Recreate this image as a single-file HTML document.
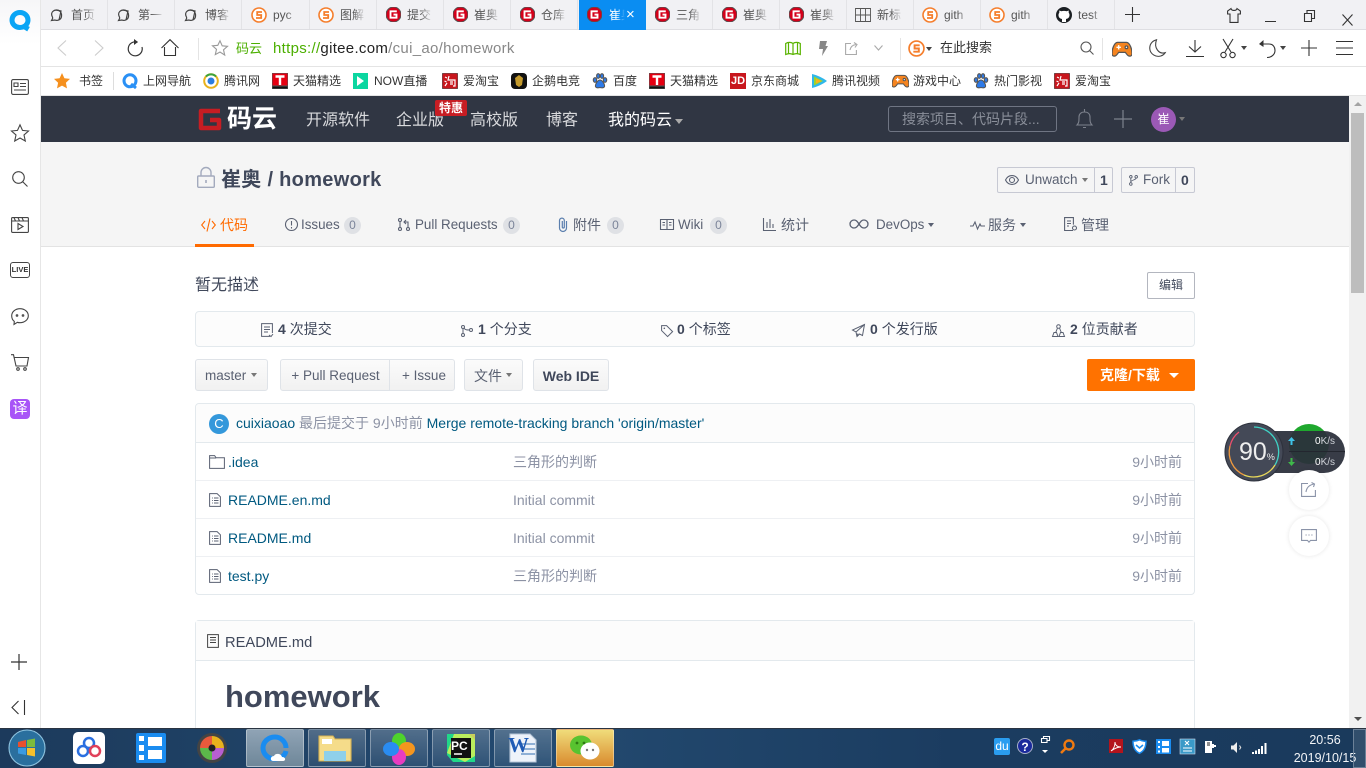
<!DOCTYPE html>
<html><head><meta charset="utf-8"><title>崔奥 / homework</title>
<style>
html,body{margin:0;padding:0;width:1366px;height:768px;overflow:hidden;background:#fff}
body{position:relative;font-family:"Liberation Sans","Noto Sans CJK SC",sans-serif;font-size:13px;color:#40485b}
.a,.t,svg.i{position:absolute}
.t{white-space:nowrap;line-height:18px}
svg.i{overflow:visible;fill:none;stroke:#555;stroke-width:1.1}
.tab{position:absolute;top:0;width:67px;height:29px;border-right:1px solid #e3e3e6;box-sizing:border-box;overflow:hidden}
.tab span{position:absolute;left:30px;top:7px;font-size:12px;line-height:16px;color:#555;white-space:nowrap;width:26px;overflow:hidden;-webkit-mask-image:linear-gradient(90deg,#000 50%,transparent)}
.bm{position:absolute;top:73px;font-size:12px;line-height:16px;color:#333;white-space:nowrap}
.nav{position:absolute;top:111px;font-size:16px;line-height:20px;color:#d9dadd;white-space:nowrap}
.rt{position:absolute;top:216px;font-size:14px;line-height:18px;color:#5a6172;white-space:nowrap}
.rt.l{font-size:13.4px}
.bd{position:absolute;top:217px;width:17px;height:17px;border-radius:50%;background:#dfe1e5;color:#7b8499;font-size:12px;line-height:17px;text-align:center}
.btn{position:absolute;top:359px;height:32px;box-sizing:border-box;border:1px solid #dfe3e8;border-radius:3px;background:linear-gradient(#fbfbfb,#f1f1f1);font-size:13.5px;line-height:32px;color:#5a6172;text-align:center;white-space:nowrap}
.name{position:absolute;left:228px;font-size:14px;line-height:18px;color:#005980;white-space:nowrap}
.msg{position:absolute;left:513px;font-size:14px;line-height:18px;color:#8c92a4;white-space:nowrap}
.tm{position:absolute;right:184px;font-size:14px;line-height:18px;color:#8c92a4;white-space:nowrap}
.sep{position:absolute;left:196px;width:998px;height:1px;background:#eef0f3}
.st{position:absolute;top:320px;font-size:14px;line-height:18px;color:#40485b;white-space:nowrap}
.st b{margin-right:4px}
.tb{position:absolute;top:729px;height:38px;box-sizing:border-box;border:1px solid rgba(255,255,255,.35);border-radius:2px;background:linear-gradient(rgba(255,255,255,.22),rgba(255,255,255,.06))}
</style></head>
<body>
<svg width="0" height="0" style="position:absolute">
<defs>
<symbol id="g" viewBox="0 0 16 16"><circle cx="8" cy="8" r="8" fill="#d4001a"/><path d="M11.5 4.6H4.8v6.8h6.4V8H8" fill="none" stroke="#fff" stroke-width="2"/></symbol>
<symbol id="s" viewBox="0 0 16 16"><circle cx="8" cy="8" r="7" fill="#fff" stroke="#f57e2c" stroke-width="1.6"/><path d="M11 5H6.2v3h4v3H5" fill="none" stroke="#f57e2c" stroke-width="1.8"/></symbol>
<symbol id="q" viewBox="0 0 16 16"><path d="M2.5 13.5C4 11 4 11 3 9 1.5 5 5 3 7.500 3 11 3 13 6 12.500 9.500 12 13 8 14 6 13z" fill="none" stroke="#444" stroke-width="1.2"/><path d="M7 3l5 1-2 9" fill="none" stroke="#444" stroke-width="1.2"/></symbol>
<symbol id="tm" viewBox="0 0 16 16"><rect width="16" height="16" fill="#e60012"/><rect y="13" width="16" height="3" fill="#111"/><path d="M3.500 3.500h9M8 3.500V12" stroke="#fff" stroke-width="2.400"/></symbol>
<symbol id="tao" viewBox="0 0 16 16"><rect width="16" height="16" rx="2" fill="#c8161d"/><path d="M3 4l2 1M2.500 8l2 1M3 13l2-3M7 3l-1 4h7v6h-2M8 9h3M8 11h3" fill="none" stroke="#fff" stroke-width="1.200"/></symbol>
<symbol id="bd" viewBox="0 0 16 16"><g fill="#2d7ae8"><ellipse cx="3" cy="7" rx="1.700" ry="2.300"/><ellipse cx="6.200" cy="3" rx="1.600" ry="2.300"/><ellipse cx="10" cy="3" rx="1.600" ry="2.300"/><ellipse cx="13" cy="7" rx="1.700" ry="2.300"/><path d="M8 7c2 0 5 4 4.500 6.500C12 15 10 15 8 14.500 6 15 4 15 3.500 13.500 3 11 6 7 8 7z"/></g></symbol>
<symbol id="gm" viewBox="0 0 18 16"><path d="M5 2h8c3 0 5 6 5 10 0 3-3 3-4.500 1L12 11H6l-1.500 2C3 15 0 15 0 12 0 8 2 2 5 2z" fill="#f5841f"/><path d="M4 6.500h4M6 4.500v4" stroke="#fff" stroke-width="1.300"/><circle cx="13" cy="6.500" r="1.200" fill="#fff"/></symbol>
<symbol id="doc" viewBox="0 0 12 14"><path d="M.6.6h7.500l3.300 3.200v9.600H.6z" fill="none" stroke="#5a6172" stroke-width="1"/><path d="M3 5h.8M5 5h4.500M3 7.500h.8M5 7.500h4.500M3 10h.8M5 10h4.500" stroke="#5a6172" stroke-width="1"/></symbol>
</defs>
</svg>

<!-- tab bar -->
<div class="a" style="left:41px;top:0;width:1325px;height:29px;background:#f1f1f4;border-bottom:1px solid #dedee2"></div>
<div class="tab" style="left:41px"><span>首页</span></div>
<div class="tab" style="left:108px"><span>第一</span></div>
<div class="tab" style="left:175px"><span>博客</span></div>
<div class="tab" style="left:243px"><span>pyc</span></div>
<div class="tab" style="left:310px"><span>图解</span></div>
<div class="tab" style="left:377px"><span>提交</span></div>
<div class="tab" style="left:444px"><span>崔奥</span></div>
<div class="tab" style="left:511px"><span>仓库</span></div>
<div class="tab" style="left:579px;height:30px;background:#0a8df2;border:0"><span style="color:#fff;width:16px">崔奥</span><div class="t" style="left:47px;top:6px;color:#fff;font-size:15px">×</div></div>
<div class="tab" style="left:646px"><span>三角</span></div>
<div class="tab" style="left:713px"><span>崔奥</span></div>
<div class="tab" style="left:780px"><span>崔奥</span></div>
<div class="tab" style="left:847px"><span>新标</span></div>
<div class="tab" style="left:914px"><span>gith</span></div>
<div class="tab" style="left:981px"><span>gith</span></div>
<div class="tab" style="left:1048px"><span>test</span></div>
<svg class="i" style="left:49px;top:7px" width="16" height="16"><use href="#q"/></svg>
<svg class="i" style="left:116px;top:7px" width="16" height="16"><use href="#q"/></svg>
<svg class="i" style="left:183px;top:7px" width="16" height="16"><use href="#q"/></svg>
<svg class="i" style="left:251px;top:7px" width="16" height="16"><use href="#s"/></svg>
<svg class="i" style="left:318px;top:7px" width="16" height="16"><use href="#s"/></svg>
<svg class="i" style="left:386px;top:7px" width="15" height="15"><use href="#g"/></svg>
<svg class="i" style="left:453px;top:7px" width="15" height="15"><use href="#g"/></svg>
<svg class="i" style="left:520px;top:7px" width="15" height="15"><use href="#g"/></svg>
<svg class="i" style="left:587px;top:7px" width="15" height="15"><use href="#g"/></svg>
<svg class="i" style="left:655px;top:7px" width="15" height="15"><use href="#g"/></svg>
<svg class="i" style="left:722px;top:7px" width="15" height="15"><use href="#g"/></svg>
<svg class="i" style="left:789px;top:7px" width="15" height="15"><use href="#g"/></svg>
<svg class="i" style="left:855px;top:8px" width="16" height="14"><path d="M.5.5h15v13H.5zM5.500.5v13M10.500.5v13M.5 7h15" stroke-width=".9"/></svg>
<svg class="i" style="left:922px;top:7px" width="16" height="16"><use href="#s"/></svg>
<svg class="i" style="left:989px;top:7px" width="16" height="16"><use href="#s"/></svg>
<svg class="i" style="left:1056px;top:7px" width="16" height="16"><circle cx="8" cy="8" r="8" fill="#1b1f23" stroke="none"/><path d="M6 15v-3c-2.500-.5-3.500-2-3.500-4 0-1 .3-1.700.8-2.300L3.300 3.500l2 .8c1.500-.5 3.900-.5 5.400 0l2-.8v2.200c.5.600.8 1.300.8 2.300 0 2-1 3.500-3.500 4v3z" fill="#fff" stroke="none"/></svg>
<svg class="i" style="left:1125px;top:7px" width="15" height="15"><path d="M7.500 0v15M0 7.500h15" stroke="#333"/></svg>
<svg class="i" style="left:1227px;top:8px" width="14" height="15"><path d="M4 .6L.6 3v3H3v8.400h8V6h2.400V3L10 .6C9.500 3 4.500 3 4 .6z" stroke="#333"/></svg>
<div class="a" style="left:1265px;top:21px;width:11px;height:1px;background:#333"></div>
<svg class="i" style="left:1304px;top:10px" width="11" height="12"><path d="M.5 3.500h7v8h-7zM3 3.500V.5h7.500v8h-3" stroke="#333"/></svg>
<svg class="i" style="left:1342px;top:14px" width="11" height="12"><path d="M.5.500l10 11M10.500.500l-10 11" stroke="#333"/></svg>

<!-- address bar -->
<div class="a" style="left:41px;top:66px;width:1325px;height:1px;background:#e4e4e4"></div>
<svg class="i" style="left:57px;top:40px" width="10" height="16"><path d="M9 .5L1 8l8 7.500" stroke="#ccc"/></svg>
<svg class="i" style="left:94px;top:40px" width="10" height="16"><path d="M1 .5L9 8l-8 7.500" stroke="#ccc"/></svg>
<svg class="i" style="left:127px;top:39px" width="17" height="18"><path d="M10.500 3.200A7 7 0 1 0 15 8" stroke="#333" stroke-width="1.200"/><path d="M7 0l4 3-4 3" fill="#333" stroke="none"/></svg>
<svg class="i" style="left:161px;top:39px" width="18" height="17"><path d="M.5 9L9 .7 17.500 9M3.500 8v8.500h11V8" stroke="#333"/></svg>
<div class="a" style="left:198px;top:38px;width:1px;height:22px;background:#e4e4e4"></div>
<svg class="i" style="left:212px;top:40px" width="16" height="16"><path d="M8 .8l2.200 5 5.300.5-4 3.500 1.200 5.300L8 12l-4.700 2.600 1.200-5.300-4-3.500 5.300-.5z" stroke="#999"/></svg>
<div class="t" style="left:236px;top:40px;font-size:13px;color:#4caf00">码云</div>
<div class="t" style="left:273px;top:40px;font-size:15px;letter-spacing:.3px;color:#888"><span style="color:#4caf00">https://</span><span style="color:#222">gitee.com</span>/cui_ao/homework</div>
<svg class="i" style="left:785px;top:41px" width="16" height="14"><path d="M.7 2.500C3 1 6 1 8 2.500 10 1 13 1 15.300 2.500v11C13 12.500 10 12.500 8 13.500 6 12.500 3 12.500.7 13.500zM8 2.500v11M3.500 1v11.500M12.500 1v11.500" stroke="#59b300" stroke-width="1.200"/></svg>
<svg class="i" style="left:819px;top:41px" width="9" height="15"><path d="M1 0h7L6.500 5H9L3 15l1-7H0z" fill="#888" stroke="none"/></svg>
<svg class="i" style="left:845px;top:42px" width="13" height="13"><path d="M6 1.500H.6v11h10.800V8M5 8c.5-3 2.500-5 6-5.500M9 .5l3 2-2 3" stroke="#aaa"/></svg>
<svg class="i" style="left:874px;top:45px" width="9" height="6"><path d="M.5.500L4.500 5l4-4.500" stroke="#aaa"/></svg>
<div class="a" style="left:900px;top:38px;width:1px;height:22px;background:#e4e4e4"></div>
<svg class="i" style="left:908px;top:40px" width="17" height="17"><use href="#s"/></svg>
<div class="a" style="left:926px;top:47px;border:3.500px solid transparent;border-top:4px solid #444;border-bottom:0"></div>
<div class="t" style="left:940px;top:39px;font-size:13px;color:#333">在此搜索</div>
<svg class="i" style="left:1080px;top:41px" width="14" height="14"><circle cx="6" cy="6" r="5" stroke="#555"/><path d="M9.500 9.500L13.500 13.500" stroke="#555"/></svg>
<div class="a" style="left:1102px;top:38px;width:1px;height:22px;background:#e4e4e4"></div>
<svg class="i" style="left:1112px;top:40px" width="20" height="18"><use href="#gm"/></svg>
<svg class="i" style="left:1149px;top:39px" width="17" height="19"><path d="M7.500.8C2.500 2 .5 6 .8 10c.5 5 6 8.500 11 7 2-.6 3.500-1.800 4.400-3.300C10 15.500 4.500 9 7.500.8z" stroke="#444"/></svg>
<svg class="i" style="left:1186px;top:40px" width="18" height="17"><path d="M9 0v12M3 6.500L9 12l6-5.500M0 16.500h18" stroke="#333"/></svg>
<svg class="i" style="left:1220px;top:39px" width="16" height="20"><path d="M3 0l8 13M13 0L5 13" stroke="#333"/><circle cx="3.500" cy="16" r="2.700" stroke="#333"/><circle cx="12.500" cy="16" r="2.700" stroke="#333"/></svg>
<div class="a" style="left:1241px;top:46px;border:3px solid transparent;border-top:4px solid #444;border-bottom:0"></div>
<svg class="i" style="left:1259px;top:40px" width="17" height="18"><path d="M1 4h9c4 0 6 3 6 6.500S13 17.500 8 17.500" stroke="#333"/><path d="M4.500 0L0 4l4.500 3" fill="#333" stroke="none"/></svg>
<div class="a" style="left:1280px;top:46px;border:3px solid transparent;border-top:4px solid #444;border-bottom:0"></div>
<svg class="i" style="left:1301px;top:40px" width="16" height="16"><path d="M8 0v16M0 8h16" stroke="#333"/></svg>
<svg class="i" style="left:1336px;top:41px" width="17" height="14"><path d="M0 .5h17M0 7h17M0 13.500h17" stroke="#333"/></svg>

<!-- bookmarks -->
<div class="a" style="left:41px;top:95px;width:1325px;height:1px;background:#e4e4e4"></div>
<svg class="i" style="left:54px;top:73px" width="16" height="16"><path d="M8 0l2.400 5.300 5.600.6-4.100 3.800 1.100 5.700L8 12.600 3 15.400l1.100-5.700L0 5.900l5.600-.6z" fill="#f5901e" stroke="none"/></svg>
<span class="bm" style="left:79px">书签</span>
<div class="a" style="left:113px;top:72px;width:1px;height:18px;background:#ddd"></div>
<svg class="i" style="left:122px;top:73px" width="16" height="16"><circle cx="8" cy="7.800" r="6" stroke="#2a90f5" stroke-width="3"/><path d="M9 11l5 4" stroke="#2a90f5" stroke-width="3"/></svg>
<span class="bm" style="left:143px">上网导航</span>
<svg class="i" style="left:203px;top:73px" width="16" height="16"><circle cx="8" cy="8" r="6.800" stroke="#e8b21d" stroke-width="2"/><path d="M3 3.500A7 7 0 0 1 13 3.500" stroke="#3ca33c" stroke-width="2"/><circle cx="8" cy="8" r="3.500" fill="#2a7de1" stroke="none"/></svg>
<span class="bm" style="left:224px">腾讯网</span>
<svg class="i" style="left:272px;top:73px" width="16" height="16"><use href="#tm"/></svg>
<span class="bm" style="left:293px">天猫精选</span>
<svg class="i" style="left:353px;top:73px" width="15" height="16"><rect width="15" height="16" fill="#0bd6a0" stroke="none"/><path d="M4 3l7 5-7 5z" fill="#fff" stroke="none"/></svg>
<span class="bm" style="left:374px">NOW直播</span>
<svg class="i" style="left:442px;top:73px" width="16" height="16"><use href="#tao"/></svg>
<span class="bm" style="left:463px">爱淘宝</span>
<svg class="i" style="left:511px;top:73px" width="16" height="16"><rect width="16" height="16" rx="4" fill="#111" stroke="none"/><path d="M8 2l4 3-1 7-3 2-3-2-1-7z" fill="#c49a2c" stroke="none"/></svg>
<span class="bm" style="left:532px">企鹅电竞</span>
<svg class="i" style="left:592px;top:73px" width="16" height="16"><use href="#bd"/></svg>
<span class="bm" style="left:613px">百度</span>
<svg class="i" style="left:649px;top:73px" width="16" height="16"><use href="#tm"/></svg>
<span class="bm" style="left:670px">天猫精选</span>
<div class="a" style="left:730px;top:73px;width:16px;height:16px;background:#c8161d;color:#fff;font-size:11px;font-weight:bold;line-height:16px;text-align:center">JD</div>
<span class="bm" style="left:751px">京东商城</span>
<svg class="i" style="left:811px;top:73px" width="16" height="16"><path d="M1 1c5 1 11 4 15 7-4 3-10 6-15 7z" fill="#2fb7ea" stroke="none"/><path d="M3 3.500l9 4.500-9 4.500z" fill="#9ed32c" stroke="none"/><path d="M5 5.500L10.500 8 5 10.500z" fill="#f5b21d" stroke="none"/></svg>
<span class="bm" style="left:832px">腾讯视频</span>
<svg class="i" style="left:892px;top:73px" width="17" height="16"><use href="#gm"/></svg>
<span class="bm" style="left:913px">游戏中心</span>
<svg class="i" style="left:973px;top:73px" width="16" height="16"><use href="#bd"/></svg>
<span class="bm" style="left:994px">热门影视</span>
<svg class="i" style="left:1054px;top:73px" width="16" height="16"><use href="#tao"/></svg>
<span class="bm" style="left:1075px">爱淘宝</span>

<!-- left sidebar -->
<div class="a" style="left:0;top:0;width:40px;height:728px;background:linear-gradient(#f6f6f8 0,#fff 45px);border-right:1px solid #e6e6e6"></div>
<svg class="i" style="left:9px;top:9px" width="23" height="24"><path d="M11 3.500c-4.500 0-8 3.400-8 7.600s3.500 7.400 8 7.400c1.500 0 3-.4 4-1l4.500 2.700" stroke="#0aa5f5" stroke-width="5"/><path d="M11 3.500c4.500 0 8 3.400 8 7.600 0 2-1 4-2.500 5.400" stroke="#0aa5f5" stroke-width="5"/></svg>
<svg class="i" style="left:11px;top:79px" width="18" height="16"><rect x=".6" y=".6" width="16.800" height="14.800" rx="1.500" stroke="#444"/><path d="M3 4h4v3.500H3zM9 4.500h6M9 7.500h6M3 11h12" stroke="#444"/></svg>
<svg class="i" style="left:11px;top:124px" width="18" height="18"><path d="M9 .8l2.500 5.600 6 .6-4.500 4 1.300 6L9 14l-5.300 3 1.300-6-4.500-4 6-.6z" stroke="#444"/></svg>
<svg class="i" style="left:12px;top:171px" width="16" height="16"><circle cx="6.500" cy="6.500" r="5.800" stroke="#444"/><path d="M10.500 10.500l5 5" stroke="#444"/></svg>
<svg class="i" style="left:11px;top:217px" width="18" height="16"><rect x=".6" y=".6" width="16.800" height="14.800" rx="1" stroke="#444"/><path d="M.6 4h16.800M3 .6l1.500 3.400M7 .6l1.500 3.400M11 .6l1.500 3.400M7 6.500l5 3-5 3z" stroke="#444"/></svg>
<div class="a" style="left:10px;top:262px;width:20px;height:16px;box-sizing:border-box;border:1.200px solid #444;border-radius:3px;font-size:7.500px;font-weight:bold;line-height:14px;text-align:center;color:#333">LIVE</div>
<svg class="i" style="left:11px;top:308px" width="18" height="17"><path d="M9 .7c4.500 0 8.300 3 8.300 7s-3.800 7-8.300 7c-1 0-1.800-.1-2.600-.4L3 16.400l.3-3C1.500 12 .7 10 .7 7.700c0-4 3.800-7 8.300-7z" stroke="#444"/><circle cx="6" cy="7.500" r=".8" fill="#444"/><circle cx="12" cy="7.500" r=".8" fill="#444"/></svg>
<svg class="i" style="left:11px;top:354px" width="18" height="17"><path d="M0 .7h2.500L5 12h11l1.500-8.500H3.200" stroke="#444"/><circle cx="7" cy="15" r="1.300" stroke="#444"/><circle cx="14" cy="15" r="1.300" stroke="#444"/></svg>
<div class="a" style="left:10px;top:399px;width:20px;height:20px;border-radius:4px;background:#a855f7;color:#fff;font-size:15px;line-height:20px;text-align:center">译</div>
<svg class="i" style="left:11px;top:654px" width="16" height="16"><path d="M8 0v16M0 8h16" stroke="#333" stroke-width="1.200"/></svg>
<svg class="i" style="left:11px;top:700px" width="15" height="15"><path d="M7.500 1L1 7.500 7.500 14M13.500 0v15" stroke="#333"/></svg>

<!-- gitee nav -->
<div class="a" style="left:41px;top:96px;width:1308px;height:46px;background:#303643"></div>
<svg class="i" style="left:198px;top:108px" width="24" height="23"><path d="M22 3H3v17h18v-8h-9" stroke="#c71d23" stroke-width="4.500" stroke-linejoin="round"/></svg>
<div class="t" style="left:227px;top:104px;font-size:25px;line-height:30px;font-weight:bold;color:#fff">码云</div>
<span class="nav" style="left:306px">开源软件</span>
<span class="nav" style="left:396px">企业版</span>
<div class="a" style="left:435px;top:100px;width:32px;height:16px;border-radius:2px;background:#c71d23;color:#fff;font-size:12px;font-weight:bold;line-height:16px;text-align:center">特惠</div>
<span class="nav" style="left:470px">高校版</span>
<span class="nav" style="left:546px">博客</span>
<span class="nav" style="left:608px;color:#fff">我的码云</span>
<div class="a" style="left:675px;top:119px;border:4.500px solid transparent;border-top:5px solid #aaa;border-bottom:0"></div>
<div class="a" style="left:888px;top:106px;width:169px;height:26px;box-sizing:border-box;border:1px solid #6f7583;border-radius:3px"></div>
<div class="t" style="left:902px;top:110px;font-size:14px;color:#8a8f9a">搜索项目、代码片段...</div>
<svg class="i" style="left:1076px;top:108px" width="17" height="22"><path d="M1 17c2-2 2-4 2-8 0-3 2-5 5.500-5S14 6 14 9c0 4 0 6 2 8zM8.500 1v3M7 19.500h3" stroke="#7d828d"/></svg>
<svg class="i" style="left:1114px;top:110px" width="18" height="18"><path d="M9 0v18M0 9h18" stroke="#7d828d" stroke-width="1.200"/></svg>
<div class="a" style="left:1151px;top:107px;width:25px;height:25px;border-radius:50%;background:#9b59b6;color:#fff;font-size:12px;line-height:25px;text-align:center">崔</div>
<div class="a" style="left:1179px;top:117px;border:3.500px solid transparent;border-top:4px solid #777;border-bottom:0"></div>

<!-- repo header -->
<div class="a" style="left:41px;top:142px;width:1308px;height:105px;background:#f5f5f5;border-bottom:1px solid #e3e3e3;box-sizing:border-box"></div>
<svg class="i" style="left:197px;top:167px" width="18" height="21"><path d="M4 9V5.500a5 5 0 0 1 10 0V9" stroke="#a3aabd" stroke-width="1.400"/><rect x=".7" y="9" width="16.600" height="11.300" rx="1" stroke="#a3aabd" stroke-width="1.400"/><path d="M9 13v3" stroke="#a3aabd" stroke-width="1.600"/></svg>
<div class="t" style="left:221px;top:167px;font-size:20px;line-height:26px;letter-spacing:.3px;font-weight:bold;color:#40485b">崔奥 / homework</div>
<div class="a" style="left:997px;top:167px;width:116px;height:26px;box-sizing:border-box;border:1px solid #c7c9d3;border-radius:2px"></div>
<div class="a" style="left:1094px;top:167px;width:1px;height:26px;background:#c7c9d3"></div>
<svg class="i" style="left:1005px;top:175px" width="14" height="10"><path d="M.5 5C2 2 4.500.6 7 .6S12 2 13.500 5C12 8 9.500 9.400 7 9.400S2 8 .5 5z" stroke="#5a6172"/><circle cx="7" cy="5" r="2.500" stroke="#5a6172"/></svg>
<div class="t" style="left:1025px;top:171px;font-size:13.500px;color:#5a6172">Unwatch</div>
<div class="a" style="left:1082px;top:178px;border:3.500px solid transparent;border-top:4px solid #777;border-bottom:0"></div>
<div class="t" style="left:1100px;top:171px;font-size:14px;font-weight:bold;color:#40485b">1</div>
<div class="a" style="left:1121px;top:167px;width:74px;height:26px;box-sizing:border-box;border:1px solid #c7c9d3;border-radius:2px"></div>
<div class="a" style="left:1175px;top:167px;width:1px;height:26px;background:#c7c9d3"></div>
<svg class="i" style="left:1129px;top:175px" width="9" height="11"><circle cx="1.800" cy="1.800" r="1.300" stroke="#5a6172" stroke-width=".9"/><circle cx="7.200" cy="1.800" r="1.300" stroke="#5a6172" stroke-width=".9"/><circle cx="1.800" cy="9" r="1.300" stroke="#5a6172" stroke-width=".9"/><path d="M1.800 3v4.800M7.200 3c0 2-5.400 2-5.400 4" stroke="#5a6172" stroke-width=".9"/></svg>
<div class="t" style="left:1143px;top:171px;font-size:13.500px;color:#5a6172">Fork</div>
<div class="t" style="left:1181px;top:171px;font-size:14px;font-weight:bold;color:#40485b">0</div>

<!-- repo tabs -->
<div class="a" style="left:195px;top:244px;width:59px;height:3px;background:#ff6a00"></div>
<svg class="i" style="left:201px;top:218px" width="15" height="14"><path d="M4 3L.7 7 4 11M11 3l3.300 4L11 11M9 .5L6 13.500" stroke="#ff6a00"/></svg>
<span class="rt" style="left:220px;color:#ff6a00">代码</span>
<svg class="i" style="left:285px;top:218px" width="13" height="13"><circle cx="6.500" cy="6.500" r="6" stroke="#5a6172"/><path d="M6.500 3v4.500M6.500 9v1.500" stroke="#5a6172"/></svg>
<span class="rt l" style="left:301px">Issues</span><span class="bd" style="left:344px">0</span>
<svg class="i" style="left:398px;top:218px" width="12" height="13"><circle cx="2" cy="2" r="1.500" stroke="#5a6172"/><circle cx="2" cy="11" r="1.500" stroke="#5a6172"/><circle cx="10" cy="11" r="1.500" stroke="#5a6172"/><path d="M2 3.500v6M10 9.500V4H6.500M8 2L6 4l2 2" stroke="#5a6172"/></svg>
<span class="rt l" style="left:415px">Pull Requests</span><span class="bd" style="left:503px">0</span>
<svg class="i" style="left:558px;top:217px" width="10" height="15"><path d="M8.500 4v7a3.500 3.500 0 0 1-7 0V3.500a2.400 2.400 0 0 1 4.800 0V10a1 1 0 0 1-2 0V4" stroke="#5b7fae" stroke-width="1.200"/></svg>
<span class="rt" style="left:573px">附件</span><span class="bd" style="left:607px">0</span>
<svg class="i" style="left:660px;top:219px" width="14" height="11"><path d="M.5.500h13v10H.5zM7 .5v10M2.500 3.500h2.500M2.500 6h2.500M9 3.500h2.500M9 6h2.500" stroke="#5a6172"/></svg>
<span class="rt l" style="left:678px">Wiki</span><span class="bd" style="left:710px">0</span>
<svg class="i" style="left:763px;top:218px" width="13" height="13"><path d="M.5 0v12.500H13M4 4v6M7 1v9M10 6v4" stroke="#5a6172"/></svg>
<span class="rt" style="left:781px">统计</span>
<svg class="i" style="left:850px;top:219px" width="18" height="10"><path d="M9 5C7 2 6 1 4 1a4 4 0 0 0 0 8c2 0 3-1 5-4s3-4 5-4a4 4 0 0 1 0 8c-2 0-3-1-5-4z" stroke="#5a6172" stroke-width="1.300"/></svg>
<span class="rt l" style="left:876px">DevOps</span>
<div class="a" style="left:928px;top:223px;border:3.500px solid transparent;border-top:4px solid #5a6172;border-bottom:0"></div>
<svg class="i" style="left:970px;top:220px" width="15" height="10"><path d="M0 6h3l2-4 2.500 7L10 4l1 2h4" stroke="#5a6172"/></svg>
<span class="rt" style="left:988px">服务</span>
<div class="a" style="left:1020px;top:223px;border:3.500px solid transparent;border-top:4px solid #5a6172;border-bottom:0"></div>
<svg class="i" style="left:1064px;top:217px" width="14" height="15"><path d="M9 13.500H.6V.6h8.800v7M3 4h4M3 6.500h4M3 9h2" stroke="#5a6172"/><circle cx="10.500" cy="11" r="2" stroke="#5a6172"/></svg>
<span class="rt" style="left:1081px">管理</span>

<!-- description -->
<div class="t" style="left:195px;top:276px;font-size:16px;line-height:20px;color:#40485b">暂无描述</div>
<div class="a" style="left:1147px;top:272px;width:48px;height:27px;box-sizing:border-box;border:1px solid #b3b6bf;border-radius:2px;font-size:12px;line-height:25px;text-align:center;color:#40485b">编辑</div>

<!-- stats -->
<div class="a" style="left:195px;top:311px;width:1000px;height:36px;box-sizing:border-box;border:1px solid #e3e9ed;border-radius:4px;background:#fcfcfc"></div>
<svg class="i" style="left:261px;top:323px" width="12" height="14"><path d="M9 13.400H.6V.6h10.800V10M3 4h6M3 6.500h6M3 9h4M8 12l2 1.500L12 11" stroke="#5a6172" stroke-width="1"/></svg>
<span class="st" style="left:278px"><b>4</b>次提交</span>
<svg class="i" style="left:461px;top:325px" width="12" height="12"><circle cx="2" cy="2" r="1.500" stroke="#5a6172" stroke-width="1"/><circle cx="2" cy="10" r="1.500" stroke="#5a6172" stroke-width="1"/><circle cx="10" cy="5" r="1.500" stroke="#5a6172" stroke-width="1"/><path d="M2 3.500v5M3 3c1 2 3 2 5.500 2" stroke="#5a6172" stroke-width="1"/></svg>
<span class="st" style="left:478px"><b>1</b>个分支</span>
<svg class="i" style="left:661px;top:325px" width="12" height="12"><path d="M.6.600h5l6 6-5 5-6-6z" stroke="#5a6172" stroke-width="1"/><circle cx="3.300" cy="3.300" r=".8" fill="#5a6172" stroke="none"/></svg>
<span class="st" style="left:677px"><b>0</b>个标签</span>
<svg class="i" style="left:852px;top:324px" width="13" height="13"><path d="M12.500.5L.5 6l3.500 2 1 4.500 2.500-2.500 3 1.500zM4 8l8.500-7.500M5 12.500l1-3" stroke="#5a6172" stroke-width="1"/></svg>
<span class="st" style="left:870px"><b>0</b>个发行版</span>
<svg class="i" style="left:1052px;top:324px" width="13" height="13"><circle cx="6.500" cy="2.500" r="1.800" stroke="#5a6172" stroke-width="1"/><path d="M3.500 9l2-5M9.500 9l-2-5M.5 12.500L2 8.500h2.500l1.500 4zM7 12.500l1.500-4H11l1.500 4z" stroke="#5a6172" stroke-width="1"/></svg>
<span class="st" style="left:1070px"><b>2</b>位贡献者</span>

<!-- buttons -->
<div class="btn" style="left:195px;width:73px;text-align:left;padding-left:9px">master</div>
<div class="a" style="left:251px;top:373px;border:3.500px solid transparent;border-top:4px solid #777;border-bottom:0"></div>
<div class="btn" style="left:280px;width:110px;border-radius:3px 0 0 3px;padding-left:1px">+ Pull Request</div>
<div class="btn" style="left:389px;width:66px;border-radius:0 3px 3px 0;padding-left:4px">+ Issue</div>
<div class="btn" style="left:464px;width:59px;text-align:left;padding-left:9px;font-size:14px">文件</div>
<div class="a" style="left:506px;top:373px;border:3.500px solid transparent;border-top:4px solid #777;border-bottom:0"></div>
<div class="btn" style="left:533px;width:76px;font-weight:bold;color:#40485b;font-size:14px">Web IDE</div>
<div class="a" style="left:1087px;top:359px;width:108px;height:32px;border-radius:2px;background:#ff7200;color:#fff;font-size:14px;font-weight:bold;line-height:33px;padding-left:13px;box-sizing:border-box">克隆/下载</div>
<div class="a" style="left:1169px;top:373px;border:5px solid transparent;border-top:5px solid #fff;border-bottom:0"></div>

<!-- file list -->
<div class="a" style="left:195px;top:403px;width:1000px;height:192px;box-sizing:border-box;border:1px solid #e3e9ed;border-radius:4px;background:#fff"></div>
<div class="a" style="left:196px;top:404px;width:998px;height:38px;background:#fcfcfc;border-radius:4px 4px 0 0"></div>
<div class="a" style="left:196px;top:442px;width:998px;height:1px;background:#e3e9ed"></div>
<div class="a" style="left:209px;top:414px;width:20px;height:20px;border-radius:50%;background:#3498db;color:#fff;font-size:13px;line-height:20px;text-align:center">C</div>
<div class="t" style="left:236px;top:414px;font-size:14px;color:#8c92a4"><span style="color:#005980">cuixiaoao</span> 最后提交于 9小时前 <span style="color:#005980">Merge remote-tracking branch 'origin/master'</span></div>
<div class="sep" style="top:480px"></div><div class="sep" style="top:518px"></div><div class="sep" style="top:556px"></div>
<svg class="i" style="left:209px;top:455px" width="16" height="14"><path d="M.6 13.400V.6h5l1.500 2.200h8.300v10.600zM.6 3h6.500" stroke="#5a6172" stroke-width="1"/></svg>
<svg class="i" style="left:209px;top:493px" width="12" height="14"><use href="#doc"/></svg>
<svg class="i" style="left:209px;top:531px" width="12" height="14"><use href="#doc"/></svg>
<svg class="i" style="left:209px;top:569px" width="12" height="14"><use href="#doc"/></svg>
<span class="name" style="top:453px">.idea</span><span class="msg" style="top:453px">三角形的判断</span><span class="tm" style="top:453px">9小时前</span>
<span class="name" style="top:491px">README.en.md</span><span class="msg" style="top:491px">Initial commit</span><span class="tm" style="top:491px">9小时前</span>
<span class="name" style="top:529px">README.md</span><span class="msg" style="top:529px">Initial commit</span><span class="tm" style="top:529px">9小时前</span>
<span class="name" style="top:567px">test.py</span><span class="msg" style="top:567px">三角形的判断</span><span class="tm" style="top:567px">9小时前</span>

<!-- readme -->
<div class="a" style="left:195px;top:620px;width:1000px;height:120px;box-sizing:border-box;border:1px solid #e3e9ed;border-radius:4px 4px 0 0;background:#fff"></div>
<div class="a" style="left:196px;top:621px;width:998px;height:39px;background:#fcfcfc;border-bottom:1px solid #e3e9ed"></div>
<svg class="i" style="left:207px;top:634px" width="12" height="14"><path d="M.6.600h10.800v12.800H.6zM3 3.500h6M3 6h6M3 8.500h6" stroke="#444" stroke-width="1"/></svg>
<div class="t" style="left:225px;top:634px;font-size:14.700px;color:#40485b">README.md</div>
<div class="t" style="left:225px;top:679px;font-size:31px;line-height:36px;font-weight:bold;color:#40485b">homework</div>

<!-- scrollbar -->
<div class="a" style="left:1349px;top:96px;width:17px;height:632px;background:#f1f1f1"></div>
<div class="a" style="left:1351px;top:113px;width:13px;height:180px;background:#bdbdbd"></div>
<div class="a" style="left:1354px;top:102px;border:4px solid transparent;border-bottom:4px solid #a3a3a3;border-top:0"></div>
<div class="a" style="left:1354px;top:717px;border:4px solid transparent;border-top:4px solid #505050;border-bottom:0"></div>

<!-- floating widgets -->
<div class="a" style="left:1289px;top:424px;width:40px;height:40px;border-radius:50%;background:#1fa82e"></div>
<div class="a" style="left:1254px;top:431px;width:91px;height:42px;border-radius:21px;background:rgba(44,48,60,.94)"></div>
<div class="a" style="left:1289px;top:451px;width:56px;height:1px;background:#23262f"></div>
<div class="a" style="left:1289px;top:470px;width:40px;height:40px;border-radius:50%;background:#fff;box-shadow:0 0 5px rgba(0,0,0,.1)"></div>
<svg class="i" style="left:1301px;top:482px" width="15" height="15"><path d="M7 1.500H.6v12.900h13.800V8M5 10c.5-4 3-7 8-8M10.500.5l3 1.500-1 3" stroke="#8a93a8" stroke-width="1.100"/></svg>
<div class="a" style="left:1289px;top:516px;width:40px;height:40px;border-radius:50%;background:#fff;box-shadow:0 0 5px rgba(0,0,0,.1)"></div>
<svg class="i" style="left:1301px;top:529px" width="16" height="14"><path d="M.6.600h14.800v10.800H9.500L8 13.200 6.500 11.400H.6z" stroke="#8a93a8" stroke-width="1.100"/><path d="M4.500 6h1.200M7.400 6h1.200M10.300 6h1.200" stroke="#8a93a8"/></svg>
<svg class="i" style="left:1224px;top:422px" width="60" height="60"><circle cx="30" cy="30" r="29" fill="#444957" stroke="#2e323d"/><path d="M30 5A25 25 0 0 1 51 43" stroke="#3fd3c6" stroke-width="1.300"/><path d="M51 43A25 25 0 0 1 20 53" stroke="#e8d85a" stroke-width="1.300"/><path d="M20 53A25 25 0 0 1 6 24" stroke="#f09a3e" stroke-width="1.300"/><path d="M6 24A25 25 0 0 1 15 10" stroke="#ec4f6d" stroke-width="1.300"/></svg>
<div class="t" style="left:1239px;top:438px;font-size:25px;line-height:28px;color:#eee">90<span style="font-size:9px">%</span></div>
<svg class="i" style="left:1288px;top:437px" width="7" height="8"><path d="M3.500 0L7 4H4.500v4h-2V4H0z" fill="#3fc3e8" stroke="none"/></svg>
<svg class="i" style="left:1288px;top:458px" width="7" height="8"><path d="M3.500 8L7 4H4.500V0h-2v4H0z" fill="#3fb94a" stroke="none"/></svg>
<div class="t" style="left:1315px;top:433px;font-size:10px;color:#cfd2d8"><span style="color:#fff">0</span>K/s</div>
<div class="t" style="left:1315px;top:454px;font-size:10px;color:#cfd2d8"><span style="color:#fff">0</span>K/s</div>

<!-- taskbar -->
<div class="a" style="left:0;top:728px;width:1366px;height:40px;background:linear-gradient(90deg,#1c3a5c,#234a70 40%,#1b3c60 70%,#1a3a5c);border-top:1px solid #2a3442;box-sizing:border-box"></div>
<svg class="i" style="left:8px;top:729px" width="38" height="38"><circle cx="19" cy="19" r="18" fill="#2a6f9e" stroke="#8fc4e0"/><path d="M10 13l8-2v7h-8z" fill="#e8502e" stroke="none"/><path d="M19 11l8-1.500V18h-8z" fill="#7dbb3c" stroke="none"/><path d="M10 19h8v7l-8-1.500z" fill="#3a9ae0" stroke="none"/><path d="M19 19h8v8.500l-8-1.500z" fill="#f5c02c" stroke="none"/></svg>
<svg class="i" style="left:73px;top:732px" width="32" height="32"><rect width="32" height="32" rx="5" fill="#fff" stroke="none"/><circle cx="16" cy="11" r="5" stroke="#2a6fe0" stroke-width="2.500"/><circle cx="10" cy="19" r="5" stroke="#2a6fe0" stroke-width="2.500"/><circle cx="22" cy="19" r="5" stroke="#e0405a" stroke-width="2.500"/></svg>
<svg class="i" style="left:136px;top:733px" width="30" height="30"><rect width="30" height="30" rx="2" fill="#1a8cf0" stroke="none"/><path d="M3 3h5v5H3zM3 12h5v6H3zM3 22h5v5H3zM12 4h14v9H12zM12 17h14v9H12z" fill="#fff" stroke="none"/></svg>
<svg class="i" style="left:197px;top:733px" width="30" height="30"><circle cx="15" cy="15" r="15" fill="#444" stroke="none"/><path d="M15 3a12 12 0 0 1 12 12H15z" fill="#e8b21d" stroke="none"/><path d="M27 15a12 12 0 0 1-12 12V15z" fill="#b85fd0" stroke="none"/><path d="M15 27A12 12 0 0 1 3 15h12z" fill="#5cb84a" stroke="none"/><path d="M3 15A12 12 0 0 1 15 3v12z" fill="#e85a3c" stroke="none"/><circle cx="15" cy="15" r="3.500" fill="#222" stroke="none"/></svg>
<div class="tb" style="left:246px;width:58px;background:linear-gradient(#8fa3b5,#6f8799)"></div>
<svg class="i" style="left:259px;top:733px" width="32" height="30"><path d="M16 4C9 4 4 9 4 15s5 11 12 11c5 0 10-3 11-8" stroke="#1a8cf0" stroke-width="5"/><path d="M16 4c6 0 11 5 11 11" stroke="#1a8cf0" stroke-width="5"/><path d="M14 28c-3 0-3-5 1-5 1-3 7-3 8 1 4 0 4 4 1 4z" fill="#fff" stroke="none"/></svg>
<div class="tb" style="left:308px;width:58px"></div>
<svg class="i" style="left:318px;top:733px" width="34" height="30"><path d="M1 3h14l2 3h16v22H1z" fill="#f5dc8a" stroke="#d8b352"/><path d="M6 18h22v10H6z" fill="#8fd0ea" stroke="none"/><path d="M4 6h10v5H4z" fill="#fff" stroke="none"/></svg>
<div class="tb" style="left:370px;width:58px"></div>
<svg class="i" style="left:383px;top:733px" width="32" height="32"><ellipse cx="16" cy="8" rx="7" ry="8" fill="#4ed32c" stroke="none"/><ellipse cx="24" cy="16" rx="8" ry="7" fill="#f5961e" stroke="none"/><ellipse cx="16" cy="24" rx="7" ry="8" fill="#e83cc0" stroke="none"/><ellipse cx="8" cy="16" rx="8" ry="7" fill="#2a8cf0" stroke="none"/></svg>
<div class="tb" style="left:432px;width:58px"></div>
<svg class="i" style="left:446px;top:733px" width="30" height="30"><path d="M1 1h22l6 6v22L7 29 1 22z" fill="#21d789" stroke="none"/><path d="M8 1h21v22L19 29 1 20z" fill="#fcf84a" opacity=".7" stroke="none"/><rect x="5" y="5" width="20" height="20" fill="#111" stroke="none"/><path d="M8 21h8" stroke="#fff" stroke-width="1.500"/></svg>
<div class="t" style="left:451px;top:737px;font-size:12px;font-weight:bold;color:#fff">PC</div>
<div class="tb" style="left:494px;width:58px"></div>
<svg class="i" style="left:507px;top:733px" width="32" height="30"><path d="M3 1h20l6 6v22H3z" fill="#eef3fa" stroke="#b6c6d8"/><path d="M14 10h14v2H14zM14 15h14v2H14zM14 20h14v2H14z" fill="#8fb0d5" stroke="none"/></svg>
<div class="t" style="left:508px;top:733px;font-size:21px;line-height:24px;font-weight:bold;font-family:'Liberation Serif',serif;color:#1f5bb5">W</div>
<div class="tb" style="left:556px;width:58px;background:linear-gradient(#f0dc7a,#d98a2e)"></div>
<svg class="i" style="left:569px;top:734px" width="32" height="28"><ellipse cx="12" cy="11" rx="11" ry="9.500" fill="#58c330" stroke="none"/><ellipse cx="21" cy="17" rx="9.500" ry="8.500" fill="#fff" stroke="none"/><circle cx="8" cy="9" r="1.400" fill="#2e7d12" stroke="none"/><circle cx="15" cy="9" r="1.400" fill="#2e7d12" stroke="none"/><circle cx="18" cy="16" r="1.200" fill="#777" stroke="none"/><circle cx="24" cy="16" r="1.200" fill="#777" stroke="none"/></svg>

<!-- tray -->
<div class="a" style="left:994px;top:738px;width:16px;height:17px;border-radius:2px;background:#2a9df0;color:#fff;font-size:12px;line-height:17px;text-align:center">du</div>
<div class="a" style="left:1017px;top:738px;width:16px;height:16px;border-radius:50%;background:#1a2a9c;border:1px solid #a8b0c8;color:#fff;font-size:12px;font-weight:bold;line-height:16px;text-align:center;box-sizing:border-box">?</div>
<svg class="i" style="left:1041px;top:736px" width="9" height="7"><path d="M.5 2.500h5.500v4H.5zM2.500 2.500V.5h6v4H6" stroke="#fff"/></svg>
<div class="a" style="left:1042px;top:750px;border:3px solid transparent;border-top:3px solid #fff;border-bottom:0"></div>
<svg class="i" style="left:1060px;top:739px" width="15" height="15"><circle cx="9" cy="6" r="4.500" stroke="#f07a10" stroke-width="2.400"/><path d="M5.500 9.500L1 14" stroke="#f07a10" stroke-width="2.600"/></svg>
<svg class="i" style="left:1109px;top:739px" width="14" height="14"><rect width="14" height="14" fill="#b3141c" stroke="none"/><path d="M2 12c3-2 4-6 4-9 0 3 2 5 6 5-3 0-6 1-10 4z" stroke="#fff" stroke-width=".9"/></svg>
<svg class="i" style="left:1132px;top:739px" width="15" height="15"><path d="M7.500.8c2 1 4 1.500 6.500 1.500 0 6-2 10-6.500 12C3 12.300 1 8.300 1 2.300 3.500 2.300 5.500 1.800 7.500.8z" fill="#fff" stroke="#1a8cf0" stroke-width="1.500"/><path d="M4 6l3.500 3L11 6" stroke="#1a8cf0" stroke-width="1.500"/></svg>
<svg class="i" style="left:1156px;top:739px" width="15" height="15"><rect width="15" height="15" fill="#1a8cf0" stroke="none"/><path d="M2 2h2v2H2zM2 7h2v2H2zM2 11.500h2v2H2zM6 2h7v5H6zM6 9h7v4.500H6z" fill="#fff" stroke="none"/></svg>
<svg class="i" style="left:1180px;top:739px" width="15" height="15"><rect width="15" height="15" fill="#3a9ac8" stroke="#cde" stroke-width=".6"/><path d="M3 9h9M3 12h9" stroke="#fff"/><path d="M5 2l4 4M9 2L5 6" stroke="#fff"/></svg>
<svg class="i" style="left:1204px;top:739px" width="13" height="15"><path d="M1 2h7v12H1z" fill="#fff" stroke="none"/><path d="M7 7h5M9 5v4" stroke="#fff" stroke-width="2"/><path d="M3 4h3M3 6h3" stroke="#222"/></svg>
<svg class="i" style="left:1231px;top:742px" width="11" height="11"><path d="M0 3.500h2.500L6 0v11L2.500 7.500H0z" fill="#eee" stroke="none"/><path d="M8.500 3.500l1.200 2-1.200 2" stroke="#ddd"/></svg>
<svg class="i" style="left:1252px;top:741px" width="16" height="13"><path d="M1 11v2M4 9.500V13M7 8v5M10 5v8M13.500 2v11" stroke="#fff" stroke-width="2"/></svg>
<div class="t" style="left:1298px;top:731px;width:54px;text-align:center;font-size:12.500px;color:#f2f4f7">20:56</div>
<div class="t" style="left:1280px;top:749px;width:90px;text-align:center;font-size:12.500px;color:#f2f4f7">2019/10/15</div>
<div class="a" style="left:1353px;top:729px;width:13px;height:39px;box-sizing:border-box;border:1px solid #6c8198;background:rgba(255,255,255,.1)"></div>
</body></html>
